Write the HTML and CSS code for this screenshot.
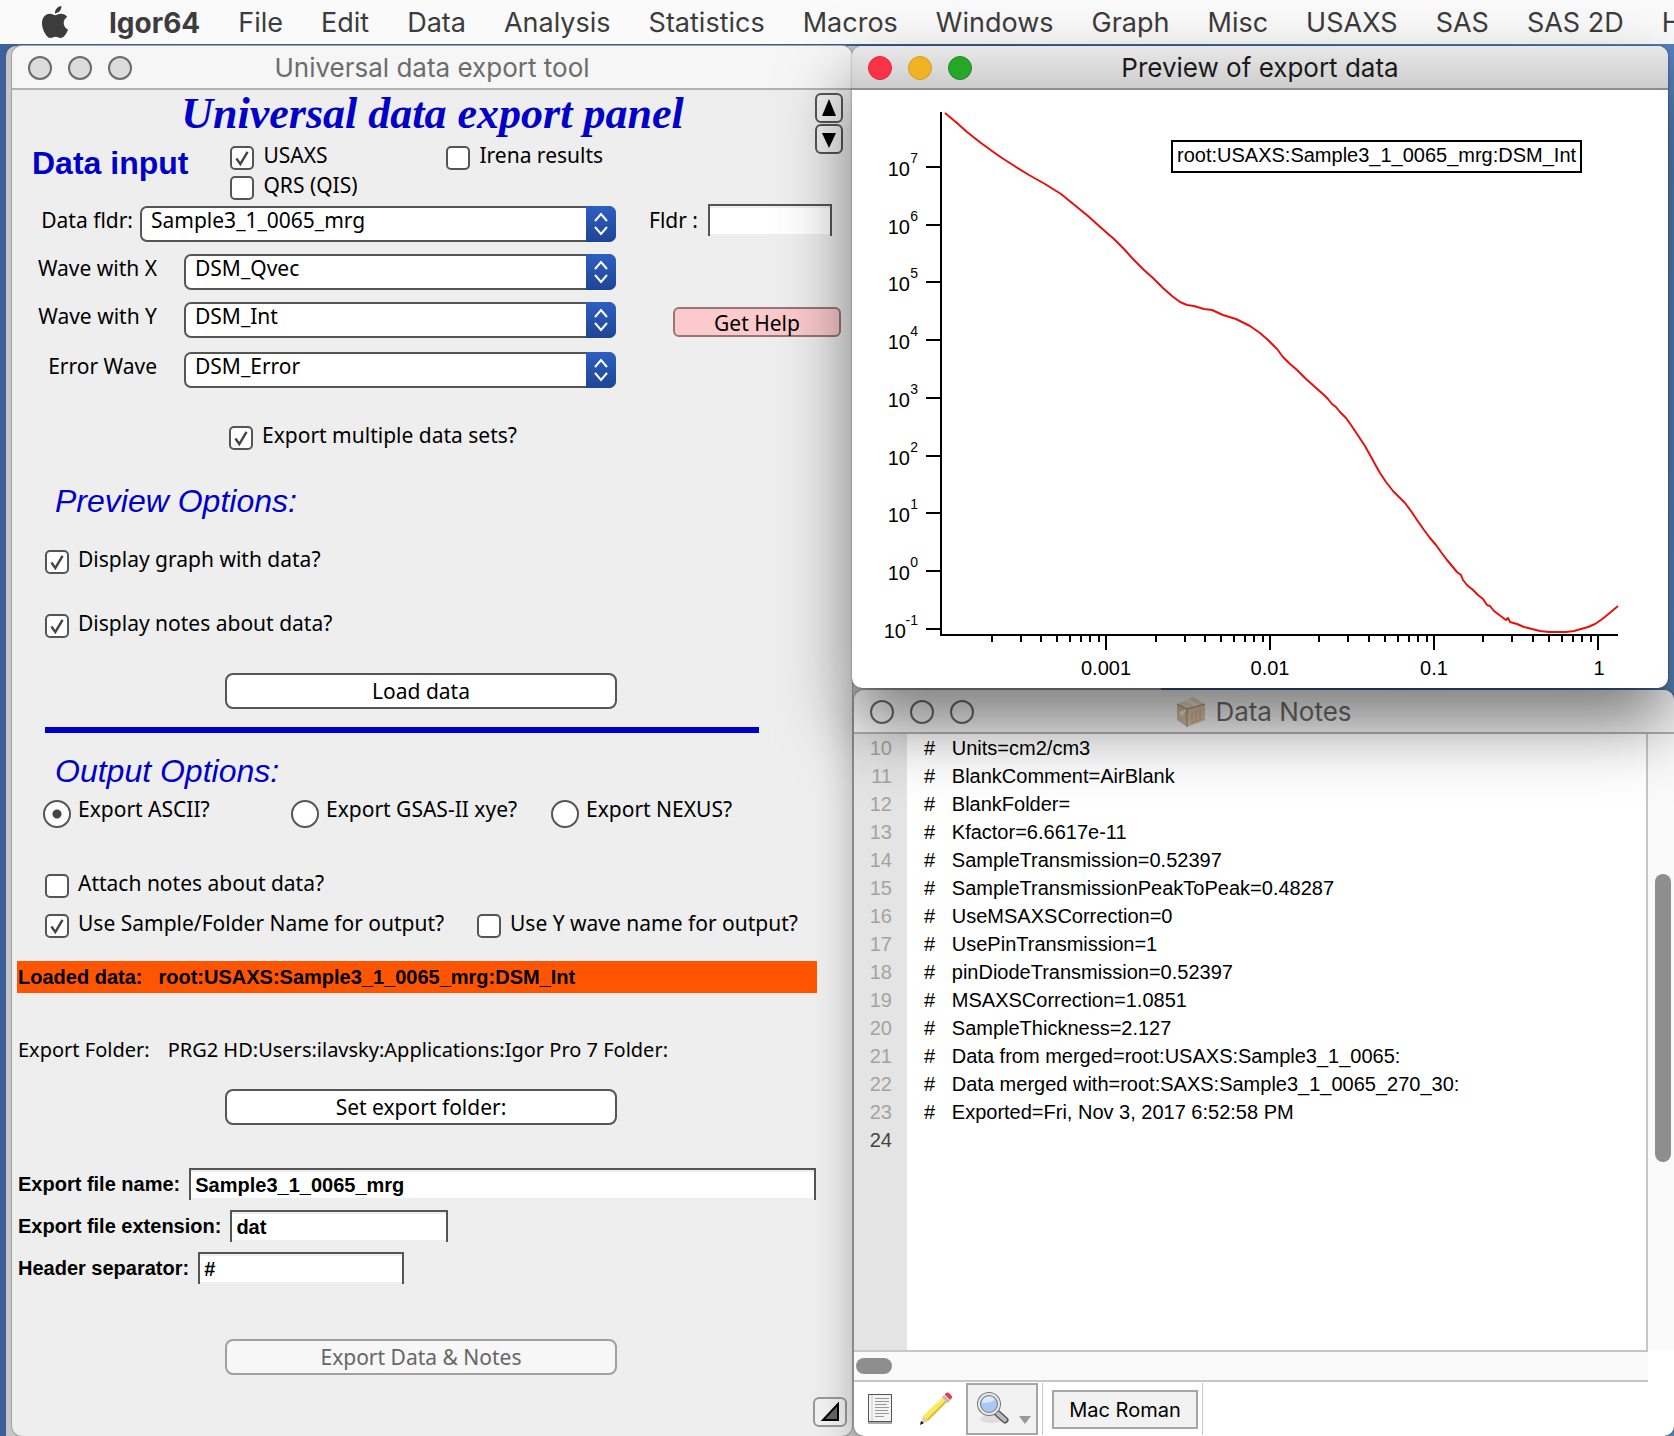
FILE: index.html
```html
<!DOCTYPE html>
<html lang="en">
<head>
<meta charset="utf-8">
<title>Igor64</title>
<meta name="viewport" content="width=device-width, initial-scale=1">
<link rel="stylesheet" href="styles.css">
</head>
<body>
<nav class="menubar" aria-label="Menu bar">
  <button class="menu menu-apple" aria-label="Apple">
    <svg width="32" height="32" viewBox="0 0 24 24"><path fill="#3c3c3c" d="M12.152 6.896c-.948 0-2.415-1.078-3.96-1.04-2.04.027-3.91 1.183-4.961 3.014-2.117 3.675-.546 9.103 1.519 12.09 1.013 1.454 2.208 3.09 3.792 3.039 1.52-.065 2.09-.987 3.935-.987 1.831 0 2.35.987 3.96.948 1.637-.026 2.676-1.48 3.676-2.948 1.156-1.688 1.636-3.325 1.662-3.415-.039-.013-3.182-1.221-3.22-4.857-.026-3.04 2.48-4.494 2.597-4.559-1.429-2.09-3.623-2.324-4.39-2.376-2-.156-3.675 1.09-4.61 1.09zM15.53 3.83c.843-1.012 1.4-2.427 1.245-3.83-1.207.052-2.662.805-3.532 1.818-.78.896-1.454 2.338-1.273 3.714 1.338.104 2.715-.688 3.559-1.701"/></svg>
  </button>
  <button class="menu menu-app">Igor64</button>
  <button class="menu">File</button>
  <button class="menu">Edit</button>
  <button class="menu">Data</button>
  <button class="menu">Analysis</button>
  <button class="menu">Statistics</button>
  <button class="menu">Macros</button>
  <button class="menu">Windows</button>
  <button class="menu">Graph</button>
  <button class="menu">Misc</button>
  <button class="menu">USAXS</button>
  <button class="menu">SAS</button>
  <button class="menu">SAS 2D</button>
  <button class="menu">Help</button>
</nav>

<main class="desktop">
  <div class="back-window"></div>

  <section class="window window-panel">
    <header class="titlebar">
      <div class="lights"><span class="light"></span><span class="light"></span><span class="light"></span></div>
      <span class="title">Universal data export tool</span>
    </header>
    <form class="panel">
      <div class="panel-top">
        <h1>Universal data export panel</h1>
        <div class="scroll-buttons">
          <button type="button" class="scroll-button" aria-label="Scroll up"><svg width="16" height="18" viewBox="0 0 16 18"><path d="M8 0 15 17H1z"/></svg></button>
          <button type="button" class="scroll-button" aria-label="Scroll down"><svg width="16" height="18" viewBox="0 0 16 18"><path d="M1 3H15L8 18z"/></svg></button>
        </div>
        <div class="data-input">
          <h2 class="heading-bold">Data input</h2>
          <div class="data-types">
            <label class="check"><input type="checkbox" checked>USAXS</label>
            <label class="check"><input type="checkbox">Irena results</label>
            <label class="check"><input type="checkbox">QRS (QIS)</label>
          </div>
        </div>
      </div>

      <div class="rows">
        <div class="row">
          <label class="label label-folder" for="fldr">Data fldr:</label>
          <div class="popup">
            <select id="fldr"><option>Sample3_1_0065_mrg</option></select>
            <span class="popup-arrows"><svg width="16" height="24" viewBox="0 0 16 24"><path d="M2 9 8 2l6 7M2 15l6 7 6-7"/></svg></span>
          </div>
          <div class="side side-filter">
            <label class="label" for="filter">Fldr :</label>
            <input class="field field-filter" id="filter" type="text">
          </div>
        </div>
        <div class="row">
          <label class="label label-wave" for="wx">Wave with X</label>
          <div class="popup">
            <select id="wx"><option>DSM_Qvec</option></select>
            <span class="popup-arrows"><svg width="16" height="24" viewBox="0 0 16 24"><path d="M2 9 8 2l6 7M2 15l6 7 6-7"/></svg></span>
          </div>
          <div class="side"></div>
        </div>
        <div class="row">
          <label class="label label-wave" for="wy">Wave with Y</label>
          <div class="popup">
            <select id="wy"><option>DSM_Int</option></select>
            <span class="popup-arrows"><svg width="16" height="24" viewBox="0 0 16 24"><path d="M2 9 8 2l6 7M2 15l6 7 6-7"/></svg></span>
          </div>
          <div class="side side-help"><button type="button" class="help">Get Help</button></div>
        </div>
        <div class="row row-error">
          <label class="label label-wave" for="we">Error Wave</label>
          <div class="popup">
            <select id="we"><option>DSM_Error</option></select>
            <span class="popup-arrows"><svg width="16" height="24" viewBox="0 0 16 24"><path d="M2 9 8 2l6 7M2 15l6 7 6-7"/></svg></span>
          </div>
          <div class="side"></div>
        </div>
      </div>

      <label class="check check-multiple"><input type="checkbox" checked>Export multiple data sets?</label>

      <h2 class="heading">Preview Options:</h2>
      <div class="preview-options">
        <label class="check"><input type="checkbox" checked>Display graph with data?</label>
        <label class="check"><input type="checkbox" checked>Display notes about data?</label>
      </div>
      <button type="button" class="button button-load">Load data</button>
      <hr>

      <h2 class="heading heading-output">Output Options:</h2>
      <div class="formats">
        <label class="check"><input type="radio" name="format" checked>Export ASCII?</label>
        <label class="check"><input type="radio" name="format">Export GSAS-II xye?</label>
        <label class="check"><input type="radio" name="format">Export NEXUS?</label>
      </div>
      <div class="output-options">
        <label class="check"><input type="checkbox">Attach notes about data?</label>
        <div class="naming">
          <label class="check"><input type="checkbox" checked>Use Sample/Folder Name for output?</label>
          <label class="check"><input type="checkbox">Use Y wave name for output?</label>
        </div>
      </div>

      <p class="loaded"><span>Loaded data:</span><span>root:USAXS:Sample3_1_0065_mrg:DSM_Int</span></p>
      <p class="folder"><span>Export Folder:</span><span>PRG2 HD:Users:ilavsky:Applications:Igor Pro 7 Folder:</span></p>
      <button type="button" class="button button-folder">Set export folder:</button>

      <div class="names">
        <div class="name-row"><label for="fname">Export file name:</label><input class="field field-name" id="fname" type="text" value="Sample3_1_0065_mrg"></div>
        <div class="name-row"><label for="fext">Export file extension:</label><input class="field field-ext" id="fext" type="text" value="dat"></div>
        <div class="name-row"><label for="fsep">Header separator:</label><input class="field field-sep" id="fsep" type="text" value="#"></div>
      </div>
      <button type="button" class="button button-export" disabled>Export Data &amp; Notes</button>
      <button type="button" class="grow" aria-label="Resize panel"><svg width="20" height="20" viewBox="0 0 20 20"><path d="M18 2V18H3z" fill="#666" stroke="#000" stroke-width="2"/></svg></button>
    </form>
  </section>

  <div class="right">
    <section class="window window-graph">
      <header class="titlebar titlebar-active">
        <div class="lights"><span class="light light-close"></span><span class="light light-min"></span><span class="light light-zoom"></span></div>
        <span class="title">Preview of export data</span>
      </header>
      <svg class="plot" viewBox="852 90 816 598" role="img" aria-label="Intensity against Q">
        <path class="axis" d="M941 112V635H1618"/>
        <path class="axis" d="M926 167h15M926 225h15M926 282h15M926 340h15M926 398h15M926 456h15M926 513h15M926 571h15M926 629h15"/>
        <path class="axis" d="M1106 635v15M1270 635v15M1434 635v15M1598 635v15"/>
        <path class="axis minor" d="M992 635v7M1021 635v7M1041 635v7M1057 635v7M1070 635v7M1081 635v7M1090 635v7M1099 635v7M1156 635v7M1185 635v7M1205 635v7M1221 635v7M1234 635v7M1245 635v7M1254 635v7M1263 635v7M1319 635v7M1348 635v7M1369 635v7M1385 635v7M1398 635v7M1409 635v7M1418 635v7M1427 635v7M1483 635v7M1512 635v7M1533 635v7M1549 635v7M1562 635v7M1573 635v7M1582 635v7M1591 635v7"/>
        <g class="tick" text-anchor="end">
          <text x="910" y="176">10</text><text x="910" y="234">10</text><text x="910" y="291">10</text><text x="910" y="349">10</text><text x="910" y="407">10</text><text x="910" y="465">10</text><text x="910" y="522">10</text><text x="910" y="580">10</text><text x="906" y="638">10</text>
        </g>
        <g class="power" text-anchor="end">
          <text x="918" y="163">7</text><text x="918" y="221">6</text><text x="918" y="278">5</text><text x="918" y="336">4</text><text x="918" y="394">3</text><text x="918" y="452">2</text><text x="918" y="509">1</text><text x="918" y="567">0</text><text x="918" y="625">-1</text>
        </g>
        <g class="tick" text-anchor="middle">
          <text x="1106" y="675">0.001</text><text x="1270" y="675">0.01</text><text x="1434" y="675">0.1</text><text x="1599" y="675">1</text>
        </g>
        <polyline class="trace" points="945,113 957,123 967,132 981,143 992,151 1002,158 1016,167 1029,175 1045,184 1061,194 1077,207 1088,216 1098,225 1107,233 1114,239 1124,249 1133,259 1144,270 1154,279 1163,288 1172,296 1180,302 1187,305 1194,306 1204,309 1212,310 1223,315 1236,319 1250,326 1260,333 1268,340 1277,349 1283,357 1289,363 1297,370 1305,378 1315,387 1324,395 1328,399 1332,404 1336,407 1340,412 1346,418 1351,425 1359,437 1365,446 1370,455 1376,466 1380,473 1386,482 1393,491 1399,497 1405,503 1411,511 1417,520 1424,530 1430,538 1436,545 1441,552 1447,560 1452,566 1457,572 1461,575 1463,580 1467,585 1473,590 1478,595 1483,599 1487,605 1490,606 1494,611 1498,614 1502,617 1506,620 1508,618 1510,622 1517,624 1524,627 1532,629 1540,631 1549,632 1558,632 1566,632 1574,631 1581,629 1588,627 1595,624 1601,620 1606,616 1612,611 1618,606"/>
        <rect class="legend-box" x="1172" y="141" width="409" height="31"/>
        <text class="legend" x="1177" y="162">root:USAXS:Sample3_1_0065_mrg:DSM_Int</text>
      </svg>
    </section>

    <section class="window window-notes">
      <header class="titlebar titlebar-notes">
        <div class="lights"><span class="light light-hollow"></span><span class="light light-hollow"></span><span class="light light-hollow"></span></div>
        <span class="title title-icon">
          <svg class="package" width="30" height="32" viewBox="0 0 30 32"><path fill="#c9b596" d="M1 8 11 13V31L1 24z"/><path fill="#d3bf9f" d="M11 13 29 8V24L11 31z"/><path fill="#e0d0b4" d="M1 8 17 1 29 8 11 13z"/><path fill="#f0e6d2" d="M8 5 20 10.500 24 9.400 12 3.200z"/><path fill="#efe4cf" d="M3 16 11 13 6 21z"/><path stroke="#d58a76" fill="none" d="M16 17v9M20 15v9M24 13v9M15 27l11-4"/><path stroke="#8d7c62" fill="none" d="M1 8 11 13V31M11 13 29 8"/></svg>
          Data Notes
        </span>
      </header>
      <div class="editor">
        <div class="lines">
          <div class="line"><span class="num">10</span><span>#   Units=cm2/cm3</span></div>
          <div class="line"><span class="num">11</span><span>#   BlankComment=AirBlank</span></div>
          <div class="line"><span class="num">12</span><span>#   BlankFolder=</span></div>
          <div class="line"><span class="num">13</span><span>#   Kfactor=6.6617e-11</span></div>
          <div class="line"><span class="num">14</span><span>#   SampleTransmission=0.52397</span></div>
          <div class="line"><span class="num">15</span><span>#   SampleTransmissionPeakToPeak=0.48287</span></div>
          <div class="line"><span class="num">16</span><span>#   UseMSAXSCorrection=0</span></div>
          <div class="line"><span class="num">17</span><span>#   UsePinTransmission=1</span></div>
          <div class="line"><span class="num">18</span><span>#   pinDiodeTransmission=0.52397</span></div>
          <div class="line"><span class="num">19</span><span>#   MSAXSCorrection=1.0851</span></div>
          <div class="line"><span class="num">20</span><span>#   SampleThickness=2.127</span></div>
          <div class="line"><span class="num">21</span><span>#   Data from merged=root:USAXS:Sample3_1_0065:</span></div>
          <div class="line"><span class="num">22</span><span>#   Data merged with=root:SAXS:Sample3_1_0065_270_30:</span></div>
          <div class="line"><span class="num">23</span><span>#   Exported=Fri, Nov 3, 2017 6:52:58 PM</span></div>
          <div class="line"><span class="num num-current">24</span><span></span></div>
        </div>
        <div class="vscroll"><span class="vthumb"></span></div>
      </div>
      <div class="hscroll"><span class="hthumb"></span></div>
      <footer class="tools">
        <button class="tool" aria-label="Page">
          <svg width="26" height="32" viewBox="0 0 26 32"><path d="M1 30h24" stroke="#aaa" stroke-width="2"/><rect x="1.500" y="1.500" width="23" height="27" fill="#f4f4f4" stroke="#555"/><path d="M5 2v26" stroke="#ccc"/><path d="M8 5.500h14M8 8.500h14M8 11.500h12M8 14.500h14M8 17.500h13M8 20.500h14M8 23.500h9" stroke="#999"/></svg>
        </button>
        <button class="tool" aria-label="Edit">
          <svg width="34" height="34" viewBox="0 0 34 34"><path fill="#d9bd3c" d="M4 25 25 5l4 4L9 29z"/><path fill="#f8e95e" d="M4 24 24 5l3 3L7 28z"/><path fill="#bbb" d="M23 5l2-2 6 6-2 2z"/><path fill="#e5404a" d="M26 2c2-2 3-2 5 0s3 3 1 5l-1 1-5-5z"/><path fill="#e8cfa0" d="M4 24l5 5-7 3z"/><path fill="#111" d="M2 29 1 33l4-2z"/></svg>
        </button>
        <button class="tool tool-find" aria-label="Find">
          <svg width="60" height="44" viewBox="0 0 60 44"><ellipse cx="20" cy="32" rx="12" ry="4" fill="#ddd"/><path d="m24 25 9 8" stroke="#555" stroke-width="7" stroke-linecap="round"/><path d="m24 25 9 8" stroke="#bbb" stroke-width="4" stroke-linecap="round"/><circle cx="17" cy="17" r="10" fill="#a9c8ef" stroke="#777" stroke-width="4"/><circle cx="17" cy="17" r="10" fill="none" stroke="#e8eaee" stroke-width="2"/><path d="M10 16a7 7 0 0 1 13-3q-5 3-13 3" fill="#dce9fa"/><path d="M47 29h12l-6 8z" fill="#999"/></svg>
        </button>
        <div class="encoding"><button class="encoding-button">Mac Roman</button></div>
      </footer>
    </section>
  </div>
</main>
</body>
</html>
```
FILE: styles.css
```css
:root {
  --blue: #0000c8;
  --edge: #555;
  --ui: "Inter", sans-serif;
  --panel: "Noto Sans", sans-serif;
  --arial: "Liberation Sans", Arial, sans-serif;
}

* { box-sizing: border-box; }

body {
  margin: 0;
  min-height: 100vh;
  display: flex;
  flex-direction: column;
  overflow: hidden;
  background: #3f6396;
  font: 20px/28px var(--arial);
  color: #000;
}

h1, h2, p { margin: 0; }
button, input, select { font: inherit; color: inherit; margin: 0; }
svg { display: block; }

/* Menu bar */
.menubar {
  display: flex;
  gap: 38px;
  height: 44px;
  padding-left: 39px;
  overflow: hidden;
  background: #fafafa;
}
.menu {
  flex: none;
  padding: 0;
  border: 0;
  background: none;
  font: 27px/46px var(--ui);
  color: #3c3c3c;
}
.menu-app { font-size: 28px; font-weight: 700; }

/* Desktop and windows */
.desktop {
  position: relative;
  flex: 1;
  display: grid;
  grid-template-columns: minmax(0, 840fr) minmax(0, 822fr);
  padding: 2px 0 0 12px;
  background: linear-gradient(100deg, #3c6097 0%, #3a5f94 50%, #5f8dc8 100%);
}
.back-window {
  position: absolute;
  left: 6px;
  top: 2px;
  bottom: 0;
  width: 69%;
  border-radius: 10px 10px 0 0;
  background: #c6c6c6;
}
.window {
  position: relative;
  border-radius: 10px;
}
.titlebar {
  display: grid;
  grid-template-columns: 120px 1fr 120px;
  align-items: center;
  height: 44px;
  border-bottom: 2px solid #b2b2b2;
  border-radius: 10px 10px 0 0;
  background: #f6f6f6;
  color: #6c6c6c;
}
.titlebar-active {
  border-color: #8e8e8e;
  background: linear-gradient(#e8e8e8, #cdcdcd);
  color: #1a1a1a;
}
.title {
  padding-top: 2px;
  text-align: center;
  white-space: nowrap;
  font: 26px/40px var(--ui);
}
.title-icon {
  display: flex;
  justify-content: center;
  align-items: center;
  gap: 9px;
}
.package { opacity: .9; }
.lights { display: flex; gap: 16px; padding: 1px 0 0 16px; }
.light {
  width: 24px;
  height: 24px;
  border: 2px solid #6a6a6a;
  border-radius: 50%;
  background: #dcdcdc;
}
.light-close { border: 1px solid #d92b3e; background: #fc3346; }
.light-min { border: 1px solid #d59c1c; background: #f0b323; }
.light-zoom { border: 1px solid #1d8a1f; background: #27a727; }
.light-hollow { background: none; }

/* Export panel */
.window-panel {
  display: flex;
  flex-direction: column;
  background: #eee;
  box-shadow: 0 0 0 1px #a2a2a2;
}
.panel {
  display: flex;
  flex-direction: column;
  align-items: flex-start;
  padding: 0 0 8px;
  font: 21px/28px var(--panel);
}
.panel-top {
  display: grid;
  grid-template-columns: 1fr 28px;
  align-self: stretch;
  padding-right: 9px;
}
h1 {
  grid-area: 1 / 1 / 2 / 3;
  padding: 1px 0 0 10px;
  text-align: center;
  font: italic 700 44px/46px "Liberation Serif", "Times New Roman", serif;
  color: var(--blue);
}
.scroll-buttons {
  grid-area: 1 / 2 / 3 / 3;
  display: flex;
  flex-direction: column;
  gap: 1px;
  padding-top: 3px;
}
.scroll-button, .grow {
  display: flex;
  justify-content: center;
  align-items: center;
  width: 28px;
  height: 30px;
  padding: 0;
  border: 2px solid var(--edge);
  border-radius: 6px;
  background: #f2f2f2;
}
.data-input {
  grid-area: 2 / 1 / 3 / 2;
  display: flex;
  gap: 42px;
  padding: 9px 0 6px 20px;
}
.data-types {
  display: grid;
  grid-template-columns: 216px auto;
  row-gap: 6px;
}
.heading-bold { font: 700 32px/34px var(--arial); color: var(--blue); }
.heading { margin: 33px 0 0 43px; font: italic 32px/36px var(--arial); color: var(--blue); }
.heading-output { margin-top: 20px; }

.check {
  display: flex;
  align-items: flex-start;
  gap: 9px;
  line-height: 19px;
  white-space: nowrap;
}
.check input {
  flex: none;
  appearance: none;
  width: 24px;
  height: 24px;
  border: 2px solid var(--edge);
  border-radius: 5px;
  background: #fff center / 20px 20px no-repeat;
}
.check input[type="checkbox"]:checked {
  background-image: url("data:image/svg+xml,%3Csvg xmlns='http://www.w3.org/2000/svg' viewBox='0 0 18 18'%3E%3Cpath d='M4 9.500 7.500 14.500 14 3.500' fill='none' stroke='%23444' stroke-width='2.200'/%3E%3C/svg%3E");
}
.check input[type="radio"] {
  width: 28px;
  height: 28px;
  border-radius: 50%;
}
.check input[type="radio"]:checked {
  background-image: radial-gradient(circle, #444 4px, transparent 5px);
}
.check-multiple { margin: 38px 0 0 217px; }

.rows {
  display: flex;
  flex-direction: column;
  gap: 12px;
  align-self: stretch;
}
.row { display: flex; align-items: flex-start; }
.row-error { margin-top: 2px; }
.label { white-space: nowrap; }
.label-folder { width: 128px; padding-right: 7px; text-align: right; }
.label-wave { width: 172px; padding-right: 27px; text-align: right; }
.popup { position: relative; flex: 1; }
.popup select {
  display: block;
  appearance: none;
  width: 100%;
  height: 36px;
  padding: 0 40px 8px 11px;
  border: 0;
  border-radius: 7px;
  background: #fff;
  box-shadow: inset 0 0 0 2px var(--edge);
}
.popup-arrows {
  position: absolute;
  top: 0;
  right: 0;
  display: flex;
  justify-content: center;
  align-items: center;
  width: 30px;
  height: 36px;
  border-radius: 0 7px 7px 0;
  background: linear-gradient(#2c5fc4, #1f4593);
  pointer-events: none;
}
.popup-arrows path { fill: none; stroke: #fff; stroke-width: 2; }
.side { display: flex; justify-content: flex-end; align-items: flex-start; width: 236px; }
.side-filter { gap: 10px; padding-right: 20px; }
.side-help { padding: 5px 11px 0 0; }
.field {
  height: 32px;
  padding: 0 4px;
  border: 2px solid var(--edge);
  border-bottom: 0;
  border-radius: 0;
  background: #fff;
  box-shadow: inset 0 -2px #eee, inset 0 2px #eee;
}
.field-filter { width: 124px; margin-top: -2px; }
.help {
  width: 168px;
  height: 30px;
  padding: 0;
  border: 2px solid #9a7577;
  border-radius: 6px;
  background: #fbcacc;
  line-height: 28px;
}

.preview-options { display: grid; gap: 40px; margin: 31px 0 0 33px; }
.button {
  width: 392px;
  height: 36px;
  margin-left: 213px;
  padding: 0;
  border: 2px solid var(--edge);
  border-radius: 8px;
  background: #fff;
  line-height: 30px;
}
.button:disabled { border-color: #a0a0a0; background: #f7f7f7; color: #666; }
.button-load { margin-top: 35px; }
.button-folder { margin-top: 25px; }
.button-export { margin-top: 55px; }
hr {
  width: 85%;
  height: 6px;
  margin: 18px 0 0 33px;
  border: 0;
  background: var(--blue);
}
.formats {
  display: grid;
  grid-template-columns: 248px 260px auto;
  margin: 11px 0 0 31px;
}
.formats .check { gap: 7px; line-height: 18px; }
.output-options { display: grid; gap: 16px; margin: 46px 0 0 33px; }
.naming { display: grid; grid-template-columns: 432px auto; }

.loaded {
  display: flex;
  gap: 16px;
  align-self: stretch;
  margin: 23px 35px 0 5px;
  padding-left: 1px;
  background: #ff5500;
  font: 700 20px/32px var(--arial);
}
.folder {
  display: flex;
  gap: 18px;
  margin: 43px 0 0 6px;
  font-size: 20px;
  white-space: nowrap;
}
.names {
  display: grid;
  gap: 10px;
  align-self: stretch;
  margin: 43px 36px 0 6px;
  font: 700 20px/32px var(--arial);
}
.name-row { display: flex; gap: 9px; }
.field-name { flex: 1; min-width: 0; }
.field-ext { width: 218px; }
.field-sep { width: 206px; }
.grow {
  align-self: flex-end;
  width: 34px;
  height: 30px;
  margin: 22px 5px 0 0;
  border-color: #999;
}

/* Graph window */
.right {
  display: flex;
  flex-direction: column;
  gap: 2px;
}
.window-graph {
  z-index: 2;
  margin-right: 6px;
  background: #fff;
  box-shadow: 0 36px 70px rgba(0, 0, 0, .5), 0 0 2px rgba(0, 0, 0, .5);
}
.plot { width: 100%; height: auto; font-family: var(--arial); }
.axis { fill: none; stroke: #000; stroke-width: 2; }
.tick, .legend { font-size: 20px; }
.power { font-size: 14px; }
.trace { fill: none; stroke: #e8100c; stroke-width: 2; stroke-linejoin: round; }
.legend-box { fill: #fff; stroke: #000; stroke-width: 2; }

/* Notes window */
.window-notes {
  z-index: 1;
  flex: 1;
  display: flex;
  flex-direction: column;
  margin-left: 2px;
  background: #fff;
  box-shadow: 0 10px 40px rgba(0, 0, 0, .3), 0 0 2px rgba(0, 0, 0, .6);
}
.editor { flex: 1; display: flex; }
.lines {
  flex: 1;
  border-right: 2px solid #c6c6c6;
  background: linear-gradient(90deg, #e4e4e4 53px, #fff 53px);
}
.line {
  display: grid;
  grid-template-columns: 38px 1fr;
  column-gap: 32px;
  white-space: pre;
}
.num { text-align: right; color: #a3a3a3; }
.num-current { color: #444; }
.vscroll { width: 26px; padding: 140px 0 0 7px; background: #fafafa; }
.vthumb { display: block; width: 16px; height: 288px; border-radius: 8px; background: #8e8e8e; }
.hscroll {
  height: 32px;
  margin-right: 26px;
  padding: 6px 2px;
  border: solid #c6c6c6;
  border-width: 2px 0;
  background: #fafafa;
}
.hthumb { display: block; width: 36px; height: 16px; border-radius: 8px; background: #8e8e8e; }
.tools { display: flex; align-items: center; height: 54px; padding-left: 13px; }
.tool { flex: none; padding: 0; border: 0; background: none; }
.tool + .tool { margin-left: 26px; }
.tool + .tool-find {
  height: 52px;
  margin-left: 13px;
  padding: 0 4px;
  border: 2px solid #a6a6a6;
  background: #f2f2f2;
}
.encoding {
  display: flex;
  align-items: center;
  height: 52px;
  margin-left: 4px;
  padding: 0 4px 0 9px;
  border: solid #c6c6c6;
  border-width: 0 1px;
}
.encoding-button {
  width: 146px;
  height: 39px;
  padding: 0;
  border: 2px solid #a6a6a6;
  background: #f2f2f2;
  font: 20px/36px var(--ui);
}
```
